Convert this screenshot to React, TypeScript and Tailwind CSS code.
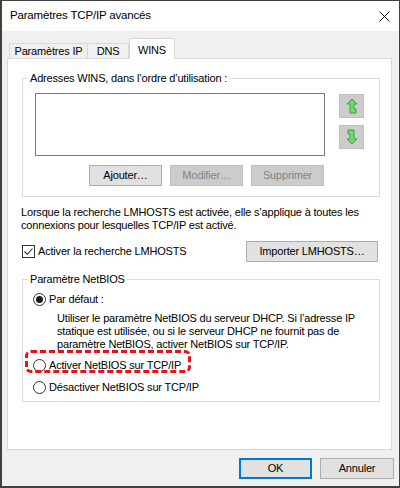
import { useState } from "react";

function Btn({ label, w, disabled, primary }: { label: string; w: string; disabled?: boolean; primary?: boolean }) {
  const base = "h-[21px] flex items-center justify-center leading-none whitespace-nowrap";
  if (disabled) return <div className={`${base} ${w} bg-[#cccccc] border border-[#bfbfbf] text-[#838383]`}>{label}</div>;
  if (primary) return <div className={`${base} ${w} bg-[#e1e1e1] border-2 border-[#0078d7] text-black`}>{label}</div>;
  return <div className={`${base} ${w} bg-[#e1e1e1] border border-[#adadad] text-black`}>{label}</div>;
}

function Radio({ checked }: { checked?: boolean }) {
  return (
    <span className="w-[13px] h-[13px] rounded-full border border-[#333] bg-white flex items-center justify-center shrink-0">
      {checked && <span className="w-[7px] h-[7px] rounded-full bg-[#1a1a1a]" />}
    </span>
  );
}

function ArrowUp() {
  return (
    <svg width="12" height="16" viewBox="0 0 12 16">
      <path d="M6 1 L11 6 L8 6 L8 11 L10 11 L10 15 L4 15 L4 6 L1 6 Z" fill="#6fdc6f" stroke="#3f9f3f" strokeWidth="1" />
    </svg>
  );
}

function ArrowDown() {
  return (
    <svg width="12" height="16" viewBox="0 0 12 16">
      <path d="M6 15 L11 10 L8 10 L8 1 L2 1 L2 5 L4 5 L4 10 L1 10 Z" fill="#6fdc6f" stroke="#3f9f3f" strokeWidth="1" />
    </svg>
  );
}

export default function App() {
  const [lmhosts, setLmhosts] = useState(true)
  const [netbios, setNetbios] = useState(0)

  return (
    <div
      className="w-[400px] h-[488px] bg-[#f0f0f0] border-t border-l-2 border-r border-b-2 border-[#404040] flex flex-col text-[11px] tracking-[-0.18px] text-black select-none whitespace-nowrap"
      style={{ fontFamily: '"Liberation Sans", Arial, sans-serif' }}
    >
      {/* barre de titre */}
      <div className="h-[30px] bg-white flex items-center justify-between pl-[8px] pr-[9px] shrink-0">
        <span className="text-[11.5px]">Paramètres TCP/IP avancés</span>
        <svg width="11" height="11" viewBox="0 0 11 11">
          <path d="M0.5 0.5 L10.5 10.5 M10.5 0.5 L0.5 10.5" stroke="#111" strokeWidth="1" />
        </svg>
      </div>

      <div className="pl-[5px] pt-[7px] flex flex-col">
        {/* onglets */}
        <div className="flex items-end h-[20px] pl-[2px]">
          <div className="h-[15px] w-[79px] border border-b-0 border-[#d9d9d9] flex items-center justify-center">Paramètres IP</div>
          <div className="h-[15px] w-[41px] border border-b-0 border-l-0 border-[#d9d9d9] flex items-center justify-center">DNS</div>
          <div className="h-[21px] w-[46px] border border-b-0 border-[#d9d9d9] bg-white flex items-start pt-[3px] justify-center -mb-px relative z-10">WINS</div>
        </div>

        {/* panneau */}
        <div className="w-[385px] h-[392px] bg-white border border-[#d9d9d9] flex flex-col pl-[14px]">
          <fieldset className="w-[358px] mt-[11px] border border-[#dcdcdc] pl-[12px] pb-[10px]">
            <legend className="-ml-[7px] px-[2px] leading-[16px]">Adresses WINS, dans l’ordre d’utilisation :</legend>
            <div className="flex mt-[7px]">
              <div className="w-[290px] h-[63px] border border-[#7a7a7a] bg-white" />
              <div className="flex flex-col gap-[7px] ml-[14px] pt-[1px]">
                <div className="w-[25px] h-[24px] bg-[#cccccc] border border-[#bfbfbf] flex items-center justify-center"><ArrowUp /></div>
                <div className="w-[25px] h-[24px] bg-[#cccccc] border border-[#bfbfbf] flex items-center justify-center"><ArrowDown /></div>
              </div>
            </div>
            <div className="flex gap-[8px] mt-[9px] pl-[54px]">
              <Btn label="Ajouter…" w="w-[73px]" />
              <Btn label="Modifier…" w="w-[73px]" disabled />
              <Btn label="Supprimer" w="w-[73px]" disabled />
            </div>
          </fieldset>

          <p className="mt-[9px] -ml-px leading-[13px]">
            Lorsque la recherche LMHOSTS est activée, elle s’applique à toutes les
            <br />
            connexions pour lesquelles TCP/IP est activé.
          </p>

          <div className="flex items-center mt-[9px] h-[21px]">
            <div className="flex items-center gap-[3px]" onClick={() => setLmhosts(!lmhosts)}>
              <span className="w-[13px] h-[13px] border border-[#333] bg-white flex items-center justify-center">
                {lmhosts && (
                  <svg width="11" height="11" viewBox="0 0 11 11">
                    <path d="M1.5 5.5 L4.2 8.3 L9.5 2.5" stroke="#222" strokeWidth="1.1" fill="none" />
                  </svg>
                )}
              </span>
              <span>Activer la recherche LMHOSTS</span>
            </div>
            <div className="ml-auto mr-[13px]">
              <Btn label="Importer LMHOSTS…" w="w-[132px]" />
            </div>
          </div>

          <fieldset className="w-[358px] mt-[9px] border border-[#dcdcdc] pl-[10px] pb-[6px]">
            <legend className="-ml-[5px] px-[2px] leading-[16px]">Paramètre NetBIOS</legend>
            <div className="flex items-center gap-[3px] mt-[5px] h-[15px]" onClick={() => setNetbios(0)}>
              <Radio checked={netbios === 0} />
              <span>Par défaut :</span>
            </div>
            <p className="pl-[24px] mt-[5px] leading-[13px]">
              Utiliser le paramètre NetBIOS du serveur DHCP. Si l’adresse IP
              <br />
              statique est utilisée, ou si le serveur DHCP ne fournit pas de
              <br />
              paramètre NetBIOS, activer NetBIOS sur TCP/IP.
            </p>
            <div className="relative mt-[7px] h-[15px] flex items-center">
              <div className="absolute left-[-8px] top-[-8px] w-[166px] h-[23px] border-[3px] border-dashed border-[#e8101a] rounded-[6px]" />
              <div className="flex items-center gap-[3px]" onClick={() => setNetbios(1)}>
                <Radio checked={netbios === 1} />
                <span>Activer NetBIOS sur TCP/IP</span>
              </div>
            </div>
            <div className="flex items-center gap-[3px] mt-[7px] h-[15px]" onClick={() => setNetbios(2)}>
              <Radio checked={netbios === 2} />
              <span>Désactiver NetBIOS sur TCP/IP</span>
            </div>
          </fieldset>
        </div>

        {/* boutons du bas */}
        <div className="flex justify-end gap-[8px] mt-[8px] pr-[5px]">
          <Btn label="OK" w="w-[73px]" primary />
          <Btn label="Annuler" w="w-[74px]" />
        </div>
      </div>
    </div>
  );
}
